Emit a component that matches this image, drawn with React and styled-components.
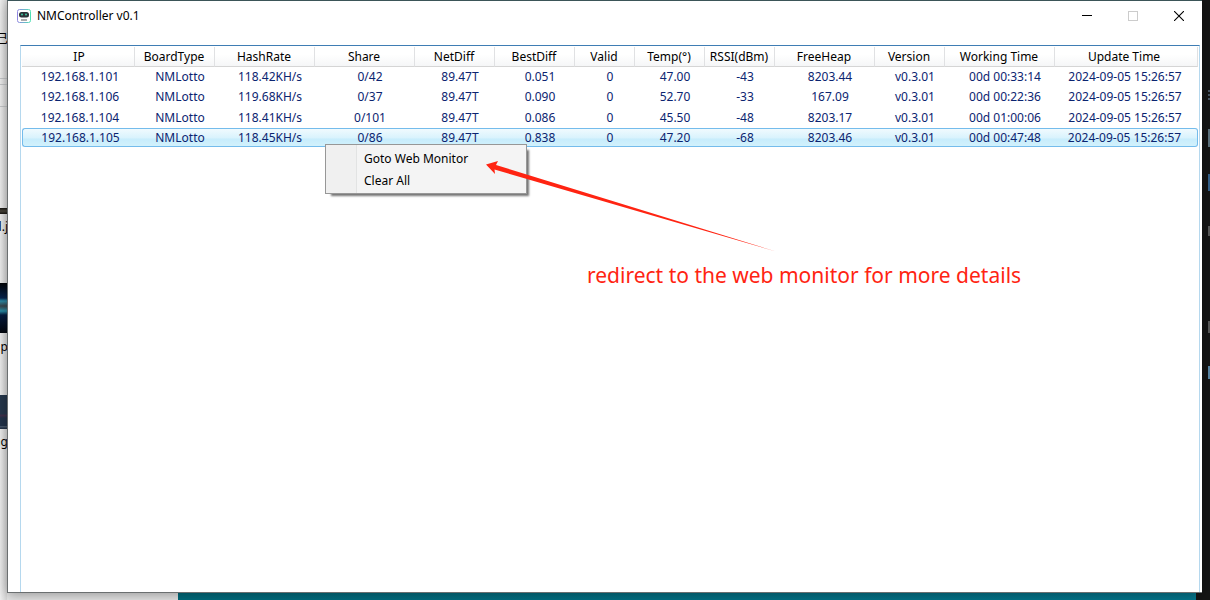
import React from "react";
import styled, { createGlobalStyle, css } from "styled-components";

const GlobalStyle = createGlobalStyle`
  *, *::before, *::after { box-sizing: border-box; }
  body {
    margin: 0;
    font-family: "Noto Sans", "Noto Sans CJK SC", sans-serif;
    font-size: 12px;
    line-height: 18px;
    color: #000;
  }
  button { font: inherit; color: inherit; border: 0; background: none; padding: 0; }
`;

const Desktop = styled.div`
  display: grid;
  grid-template-columns: 7px minmax(0, 1fr) 8px;
  min-height: 100vh;
  overflow: hidden;
  background: linear-gradient(90deg, #e6e6e6 178px, #026c7d 178px, #04778e 100%);
`;

const LeftStrip = styled.div`
  display: flex;
  flex-direction: column;
  overflow: hidden;
  background: linear-gradient(90deg, #efefef, #d8d8d8);
`;

const Gap = styled.div`
  flex: none;
  height: ${(p) => p.$h}px;
`;

const Thumb = styled.div`
  flex: none;
  height: ${(p) => p.$h}px;
  background: ${(p) => p.$fill};
`;

const Label = styled.div`
  flex: none;
  display: flex;
  justify-content: flex-end;
  height: 18px;
  margin-right: -1px;
  white-space: nowrap;
`;

const RightStrip = styled.div`
  display: flex;
  flex-direction: column;
  align-items: flex-end;
  background: #151515;
  box-shadow: -6px 0 0 #151515;
`;

const Tick = styled.div`
  flex: none;
  width: 2px;
  height: ${(p) => p.$h}px;
  background: ${(p) => p.$fill};
`;

const Window = styled.main`
  position: relative;
  z-index: 1;
  display: flex;
  flex-direction: column;
  margin-bottom: 7px;
  background: #fff;
  border: 1px solid #6b6f70;
  border-top-color: #3b5558;
  border-right: 0;
  box-shadow: 0 2px 12px rgba(0, 0, 0, 0.35);
`;

const TitleBar = styled.header`
  display: flex;
  align-items: center;
  height: 30px;
  padding-left: 9px;
`;

const Title = styled.h1`
  flex: 1;
  margin: 0 0 0 6px;
  font-size: 12px;
  font-weight: 400;
`;

const WindowButton = styled.button`
  display: flex;
  align-items: center;
  justify-content: center;
  width: 46px;
  height: 28px;
  color: ${(p) => (p.disabled ? "#ccc" : "#000")};
`;

const ListView = styled.section`
  flex: 1;
  margin: 14px 2px 0 12px;
  padding: 1px;
  border: 1px solid #b5d8ee;
  border-top-color: #3f7db4;
  border-bottom: 0;
`;

const Table = styled.table`
  width: 100%;
  table-layout: fixed;
  border-collapse: separate;
  border-spacing: 0;
`;

const HeadCell = styled.th`
  height: 20px;
  padding: 0 1px 0 0;
  font-weight: 400;
  line-height: 18px;
  white-space: nowrap;
  background: linear-gradient(#fff 40%, #f5f6f7);
  border-right: 1px solid #e0e1e3;
  border-bottom: 1px solid #d5d5d5;

  &:first-child { padding-left: 3px; }
  &:last-child { padding-right: 4px; }
`;

const Cell = styled.td`
  height: 20px;
  padding: 0 0 0 10px;
  color: #0b2470;
  line-height: 18px;
  text-align: center;
  white-space: nowrap;

  &:first-child { padding-left: 3px; }
  &:last-child { padding: 0 3px 0 0; }
`;

const Row = styled.tr`
  &:nth-child(3n) ${Cell} {
    height: 21px;
    padding-top: 1px;
  }

  ${(p) =>
    p.$selected &&
    css`
      ${Cell} {
        height: 19px;
        line-height: 17px;
        background: linear-gradient(#f0fafe, #daf3fd 50%, #c8edfc 60%, #d2f1fc);
        border: solid #74bcec;
        border-width: 1px 0;
      }
      ${Cell}:first-child {
        border-left-width: 1px;
        border-radius: 3px 0 0 3px;
      }
      ${Cell}:last-child {
        border-right-width: 1px;
        border-radius: 0 3px 3px 0;
      }
    `}
`;

const Menu = styled.div`
  position: absolute;
  top: 143px;
  left: 317px;
  width: 202px;
  padding: 2px;
  background: linear-gradient(90deg, #f0f0f0 30px, #e2e3e3 30px, #e2e3e3 31px, #f4f4f4 31px);
  border: 1px solid #979797;
  box-shadow: 4px 4px 2px -2px rgba(0, 0, 0, 0.55);
`;

const MenuItem = styled.button`
  display: block;
  width: 100%;
  height: 22px;
  padding: 2px 0 0 36px;
  text-align: left;
`;

const Arrow = styled.svg`
  position: absolute;
  top: 157px;
  left: 476px;
`;

const Note = styled.p`
  position: absolute;
  top: 258px;
  left: 579px;
  margin: 0;
  font-size: 21px;
  line-height: 32px;
  color: #ff2412;
  white-space: nowrap;
`;

const columns = [
  ["IP", 113],
  ["BoardType", 80],
  ["HashRate", 100],
  ["Share", 100],
  ["NetDiff", 80],
  ["BestDiff", 80],
  ["Valid", 60],
  ["Temp(°)", 70],
  ["RSSI(dBm)", 70],
  ["FreeHeap", 100],
  ["Version", 70],
  ["Working Time", 110],
  ["Update Time", null],
];

const miners = [
  ["192.168.1.101", "NMLotto", "118.42KH/s", "0/42", "89.47T", "0.051", "0", "47.00", "-43", "8203.44", "v0.3.01", "00d 00:33:14", "2024-09-05 15:26:57"],
  ["192.168.1.106", "NMLotto", "119.68KH/s", "0/37", "89.47T", "0.090", "0", "52.70", "-33", "167.09", "v0.3.01", "00d 00:22:36", "2024-09-05 15:26:57"],
  ["192.168.1.104", "NMLotto", "118.41KH/s", "0/101", "89.47T", "0.086", "0", "45.50", "-48", "8203.17", "v0.3.01", "00d 01:00:06", "2024-09-05 15:26:57"],
  ["192.168.1.105", "NMLotto", "118.45KH/s", "0/86", "89.47T", "0.838", "0", "47.20", "-68", "8203.46", "v0.3.01", "00d 00:47:48", "2024-09-05 15:26:57"],
];

const selectedIp = "192.168.1.105";

function AppIcon() {
  return (
    <svg width="14" height="14" viewBox="0 0 14 14" aria-hidden="true">
      <defs>
        <linearGradient id="frame" x1="0" y1="0" x2="1" y2="0">
          <stop offset="0" stopColor="#8f86e0" />
          <stop offset="1" stopColor="#4fe0b4" />
        </linearGradient>
      </defs>
      <rect x="0.5" y="0.5" width="13" height="13" rx="2" fill="#fff" stroke="url(#frame)" />
      <rect x="2" y="3" width="10" height="5.5" rx="2.5" fill="#2b3338" />
      <circle cx="5" cy="5.5" r="1" fill="#3fc9a0" />
      <circle cx="9" cy="5.5" r="1" fill="#3fc9a0" />
      <path d="M4 11h6" stroke="#777" strokeWidth="1.2" />
    </svg>
  );
}

export default function App() {
  return (
    <>
      <GlobalStyle />
      <Desktop>
        <LeftStrip aria-hidden="true">
          <Gap $h={30} />
          <Label>己</Label>
          <Gap $h={30} />
          <Thumb $h={1} $fill="#c4c6c8" />
          <Gap $h={5} />
          <Thumb $h={1} $fill="#c4c6c8" />
          <Gap $h={21} />
          <Thumb $h={1} $fill="#c4c6c8" />
          <Gap $h={101} />
          <Thumb $h={6} $fill="linear-gradient(#171512, #4a463b 50%, #171512)" />
          <Gap $h={4} />
          <Label>d.j</Label>
          <Gap $h={47} />
          <Thumb $h={50} $fill="linear-gradient(#020306, #06234d 30%, #2d8ba6 36%, #39444b 46%, #2b8fa8 56%, #061c40 64%, #03060d)" />
          <Gap $h={5} />
          <Label>p</Label>
          <Gap $h={39} />
          <Thumb $h={34} $fill="linear-gradient(#26374c 55%, #40304a 60%, #22334a 68%, #22334a 90%, #4b5b70 92%, #1c2b40)" />
          <Gap $h={4} />
          <Label>ng</Label>
        </LeftStrip>
        <Window>
          <TitleBar>
            <AppIcon />
            <Title>NMController v0.1</Title>
            <WindowButton type="button" aria-label="Minimize">
              <svg width="10" height="10" viewBox="0 0 10 10" fill="none" stroke="currentColor">
                <path d="M0 4.5h10" />
              </svg>
            </WindowButton>
            <WindowButton type="button" aria-label="Maximize" disabled>
              <svg width="10" height="10" viewBox="0 0 10 10" fill="none" stroke="currentColor">
                <rect x="0.5" y="0.5" width="9" height="9" />
              </svg>
            </WindowButton>
            <WindowButton type="button" aria-label="Close">
              <svg width="10" height="10" viewBox="0 0 10 10" fill="none" stroke="currentColor" strokeWidth="1.1">
                <path d="M0 0l10 10M10 0l-10 10" />
              </svg>
            </WindowButton>
          </TitleBar>
          <ListView>
            <Table>
              <colgroup>
                {columns.map(([name, width]) => (
                  <col key={name} width={width ?? undefined} />
                ))}
              </colgroup>
              <thead>
                <tr>
                  {columns.map(([name]) => (
                    <HeadCell key={name} scope="col">{name}</HeadCell>
                  ))}
                </tr>
              </thead>
              <tbody>
                {miners.map((miner) => (
                  <Row key={miner[0]} $selected={miner[0] === selectedIp}>
                    {miner.map((value, i) => (
                      <Cell key={columns[i][0]}>{value}</Cell>
                    ))}
                  </Row>
                ))}
              </tbody>
            </Table>
          </ListView>
          <Menu role="menu">
            <MenuItem type="button" role="menuitem">Goto Web Monitor</MenuItem>
            <MenuItem type="button" role="menuitem">Clear All</MenuItem>
          </Menu>
          <Arrow width="300" height="96" viewBox="0 0 300 96" aria-hidden="true">
            <path d="M2 6.5L14 3L12 7L292 93.500L10.500 11.500L11 16Z" fill="#ff2412" />
          </Arrow>
          <Note>redirect to the web monitor for more details</Note>
        </Window>
        <RightStrip aria-hidden="true">
          <Gap $h={90} />
          <Tick $h={10} $fill="repeating-linear-gradient(#4a5866 0 2px, #151515 2px 4px)" />
          <Gap $h={29} />
          <Tick $h={18} $fill="#5f7480" />
          <Gap $h={27} />
          <Tick $h={17} $fill="#35618c" />
          <Gap $h={35} />
          <Tick $h={10} $fill="#5a5a5a" />
          <Gap $h={85} />
          <Tick $h={12} $fill="#5a5a5a" />
          <Gap $h={33} />
          <Tick $h={13} $fill="#5b88a8" />
        </RightStrip>
      </Desktop>
    </>
  );
}
